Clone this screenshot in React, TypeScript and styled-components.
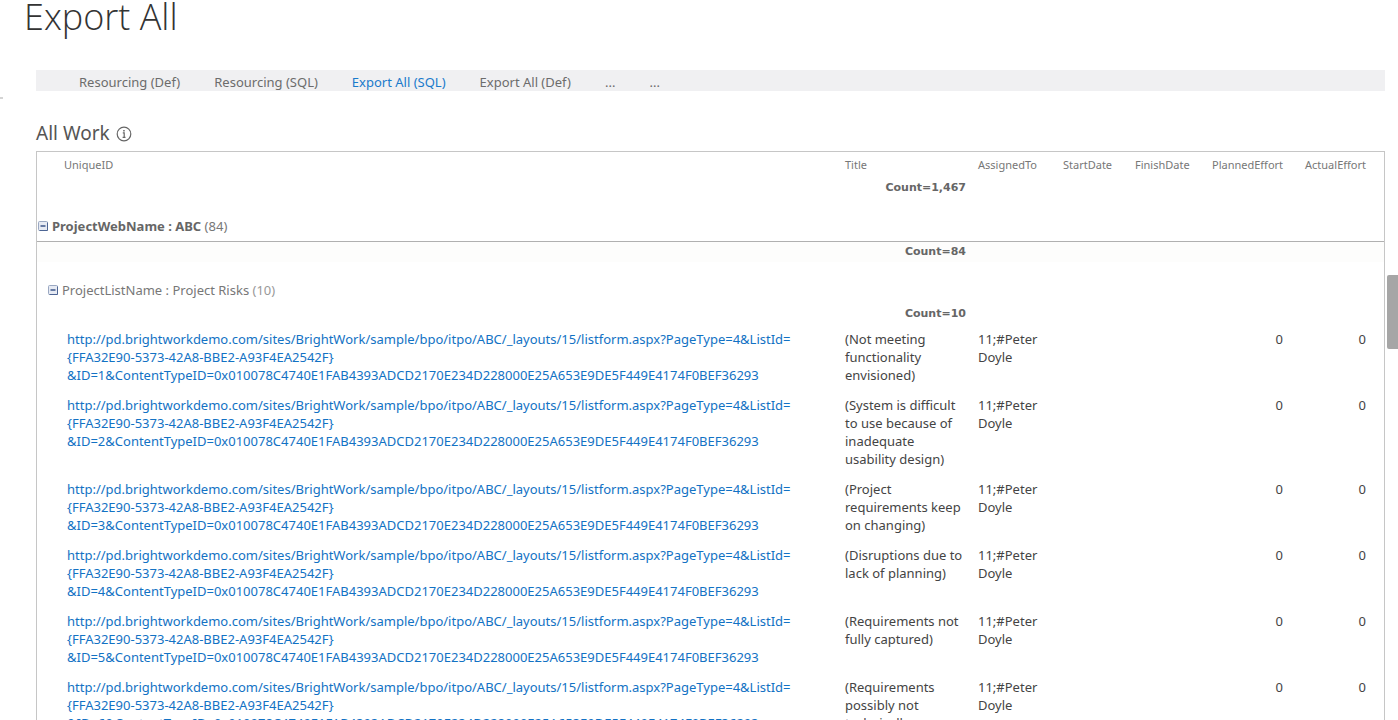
import React from "react";
import styled, { createGlobalStyle } from "styled-components";

const GlobalStyle = createGlobalStyle`
  *, *::before, *::after { box-sizing: border-box; }
  body {
    margin: 0;
    background: #fff;
    color: #444;
    font-family: "Noto Sans", "Open Sans", sans-serif;
    font-size: 13px;
    line-height: 18px;
  }
`;

const Page = styled.main`
  position: relative;
  height: 100vh;
  overflow: hidden;
  padding: 0 13px 0 36px;
`;

const PageTitle = styled.h1`
  margin: 0 0 0 -12px;
  padding-bottom: 36px;
  font-family: "Open Sans", sans-serif;
  font-size: 36px;
  line-height: 34px;
  font-weight: 300;
  color: #333;
`;

const TopNav = styled.nav`
  display: flex;
  gap: 34px;
  height: 21px;
  padding: 3px 0 0 43px;
  background: #f0f0f2;
`;

const NavLink = styled.a<{ $active?: boolean }>`
  color: ${(p) => (p.$active ? "#1a7acb" : "#6c6c6c")};
  text-decoration: none;
  white-space: nowrap;
`;

const SectionTitle = styled.h2`
  display: flex;
  align-items: center;
  gap: 6px;
  margin: 0;
  padding: 30px 0 6px;
  font-size: 19px;
  line-height: 24px;
  font-weight: 400;
  color: #555;
`;

const InfoButton = styled.button`
  display: flex;
  padding: 2px 0 0;
  border: 0;
  background: none;
  color: #666;
`;

const Panel = styled.section`
  border: 1px solid #c6c6c6;
`;

const Table = styled.table`
  width: 100%;
  table-layout: fixed;
  border-collapse: collapse;
`;

const Col = styled.col<{ $width?: number }>`
  width: ${(p) => (p.$width ? `${p.$width}px` : "auto")};
`;

const HeadCell = styled.th<{ $align?: "left" | "right" }>`
  height: 26px;
  padding: 0 6px;
  font-size: 11px;
  font-weight: 400;
  color: #777;
  text-align: ${(p) => p.$align ?? "left"};
  white-space: nowrap;
  &:first-child { padding-left: 27px; }
  &:last-child { padding-right: 18px; }
`;

const CountRow = styled.tr<{ $band?: boolean }>`
  height: 20px;
  background: ${(p) => (p.$band ? "#fdfdfc" : "transparent")};
`;

const CountCell = styled.td`
  padding: 0 6px;
  font-family: "DejaVu Sans", sans-serif;
  font-size: 11px;
  font-weight: 700;
  color: #666;
  text-align: right;
`;

const GroupCell = styled.td<{ $nested?: boolean }>`
  padding: ${(p) => (p.$nested ? "14px 0 0 11px" : "14px 0 1px 1px")};
  border-bottom: ${(p) => (p.$nested ? "0" : "1px solid #b0b0b0")};
`;

const GroupLabel = styled.div<{ $strong?: boolean }>`
  display: flex;
  align-items: center;
  gap: 4px;
  height: 28px;
  color: ${(p) => (p.$strong ? "#666" : "#777")};
  font-weight: ${(p) => (p.$strong ? 700 : 400)};
`;

const GroupCount = styled.span<{ $light?: boolean }>`
  font-weight: 400;
  color: ${(p) => (p.$light ? "#999" : "#777")};
`;

const ToggleButton = styled.button`
  display: flex;
  padding: 0;
  border: 0;
  background: none;
`;

const Cell = styled.td<{ $align?: "left" | "right" }>`
  padding: 6px;
  vertical-align: top;
  text-align: ${(p) => p.$align ?? "left"};
  white-space: pre;
  &:first-child { padding-left: 30px; }
  &:last-child { padding-right: 18px; }
`;

const ItemLink = styled.a`
  color: #1272c4;
  text-decoration: none;
`;

const ScrollThumb = styled.div`
  position: absolute;
  top: 275px;
  right: 0;
  width: 11px;
  height: 74px;
  border-radius: 2px 0 0 2px;
  background: #a6a6a6;
`;

const EdgeMark = styled.div`
  position: absolute;
  top: 97px;
  left: 0;
  width: 3px;
  height: 2px;
  background: #d4d4d4;
`;

function InfoIcon() {
  return (
    <svg width="16" height="16" viewBox="0 0 16 16" fill="none" aria-hidden="true">
      <circle cx="8" cy="8" r="6.8" stroke="currentColor" strokeWidth="1.2" />
      <path d="M6.8 6.9h1.4v4.2M6.6 11.4h2.9" stroke="currentColor" strokeWidth="1.2" />
      <rect x="7.2" y="4" width="1.5" height="1.5" fill="currentColor" />
    </svg>
  );
}

function CollapseIcon() {
  return (
    <svg width="10" height="10" viewBox="0 0 10 10" aria-hidden="true">
      <rect x="0.5" y="0.5" width="9" height="9" rx="1" fill="#e6eaf3" stroke="#9aa8c2" />
      <path d="M9.5 1.5v8h-8" fill="none" stroke="#4d6594" />
      <path d="M2.5 5h5" stroke="#2f4a80" strokeWidth="1.4" />
    </svg>
  );
}

const navItems = ["Resourcing (Def)", "Resourcing (SQL)", "Export All (SQL)", "Export All (Def)", "...", "..."];

const titles = [
  "(Not meeting\nfunctionality\nenvisioned)",
  "(System is difficult\nto use because of\ninadequate\nusability design)",
  "(Project\nrequirements keep\non changing)",
  "(Disruptions due to\nlack of planning)",
  "(Requirements not\nfully captured)",
  "(Requirements\npossibly not\ntechnically\nfeasible)",
];

const itemUrl = (id: number) =>
  "http://pd.brightworkdemo.com/sites/BrightWork/sample/bpo/itpo/ABC/_layouts/15/listform.aspx?PageType=4&ListId=\n" +
  "{FFA32E90-5373-42A8-BBE2-A93F4EA2542F}\n" +
  `&ID=${id}&ContentTypeID=0x010078C4740E1FAB4393ADCD2170E234D228000E25A653E9DE5F449E4174F0BEF36293`;

function Count({ value, band }: { value: string; band?: boolean }) {
  return (
    <CountRow $band={band}>
      <td />
      <CountCell>Count={value}</CountCell>
      <td colSpan={5} />
    </CountRow>
  );
}

function Group({ label, count, nested }: { label: string; count: number; nested?: boolean }) {
  return (
    <tr>
      <GroupCell colSpan={7} $nested={nested}>
        <GroupLabel $strong={!nested}>
          <ToggleButton type="button" aria-label={`Collapse ${label}`}>
            <CollapseIcon />
          </ToggleButton>
          <span>
            {label} <GroupCount $light={nested}>({count})</GroupCount>
          </span>
        </GroupLabel>
      </GroupCell>
    </tr>
  );
}

export default function App() {
  return (
    <Page>
      <GlobalStyle />
      <PageTitle>Export All</PageTitle>
      <TopNav>
        {navItems.map((item, i) => (
          <NavLink key={i} href="#" $active={item === "Export All (SQL)"}>
            {item}
          </NavLink>
        ))}
      </TopNav>
      <SectionTitle>
        All Work
        <InfoButton type="button" aria-label="About this list">
          <InfoIcon />
        </InfoButton>
      </SectionTitle>
      <Panel>
        <Table>
          <colgroup>
            <Col />
            <Col $width={133} />
            <Col $width={85} />
            <Col $width={72} />
            <Col $width={77} />
            <Col $width={83} />
            <Col $width={95} />
          </colgroup>
          <thead>
            <tr>
              <HeadCell>UniqueID</HeadCell>
              <HeadCell>Title</HeadCell>
              <HeadCell>AssignedTo</HeadCell>
              <HeadCell>StartDate</HeadCell>
              <HeadCell>FinishDate</HeadCell>
              <HeadCell $align="right">PlannedEffort</HeadCell>
              <HeadCell $align="right">ActualEffort</HeadCell>
            </tr>
          </thead>
          <tbody>
            <Count value="1,467" />
            <Group label="ProjectWebName : ABC" count={84} />
            <Count value="84" band />
            <Group label="ProjectListName : Project Risks" count={10} nested />
            <Count value="10" />
            {titles.map((title, i) => (
              <tr key={title}>
                <Cell>
                  <ItemLink href="#">{itemUrl(i + 1)}</ItemLink>
                </Cell>
                <Cell>{title}</Cell>
                <Cell>{"11;#Peter\nDoyle"}</Cell>
                <Cell />
                <Cell />
                <Cell $align="right">0</Cell>
                <Cell $align="right">0</Cell>
              </tr>
            ))}
          </tbody>
        </Table>
      </Panel>
      <ScrollThumb />
      <EdgeMark />
    </Page>
  );
}
